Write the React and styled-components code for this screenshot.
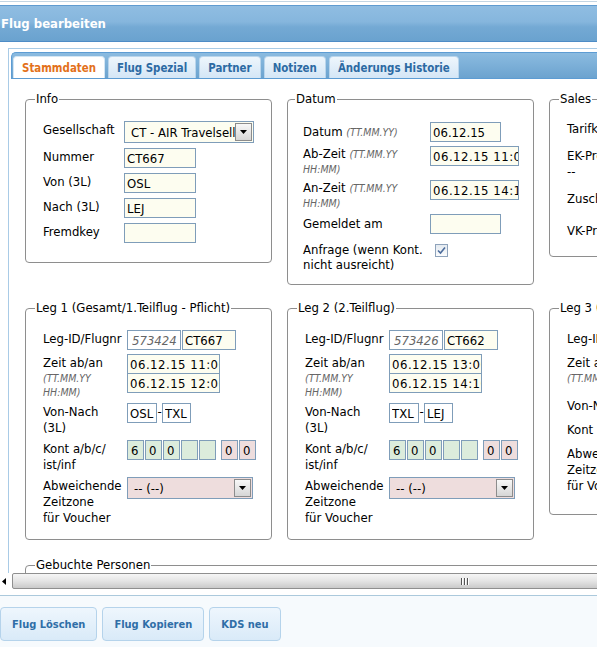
import React from "react";
import styled, { createGlobalStyle } from "styled-components";

const FONT = `"DejaVu Sans Condensed", "DejaVu Sans", Verdana, sans-serif`;

const GlobalStyle = createGlobalStyle`
  html, body { margin: 0; padding: 0; background: #fff; }
  body { font-family: ${FONT}; font-size: 13px; color: #000; overflow: hidden; }
  * { box-sizing: border-box; }
`;

const Page = styled.div`
  width: 597px;
  height: 647px;
  display: flex;
  flex-direction: column;
  overflow: hidden;
  background: #fff;
`;

const TopStrip = styled.div`
  flex: none;
  height: 5px;
  background: linear-gradient(to bottom, #fff 0, #fff 1px, #c3d5e3 1px, #c3d5e3 2px, #fff 2px);
`;

const Header = styled.header`
  flex: none;
  height: 37px;
  border-top: 1px solid #5f9bd0;
  border-bottom: 1px solid #4e8cc6;
  background: linear-gradient(to bottom, #8fbde2 0%, #86b6dd 45%, #74a9d4 60%, #6aa2cf 100%);
  display: flex;
  align-items: center;
  padding-left: 1px;
  color: #fff;
  font-weight: bold;
  font-size: 13px;
`;

const ScrollArea = styled.div`
  flex: none;
  height: 547px;
  display: flex;
  flex-direction: column;
`;

const Viewport = styled.div`
  flex: 1;
  min-height: 0;
  overflow: hidden;
  padding: 6px 0 0 8px;
`;

const Panel = styled.div`
  width: 960px;
  border-top: 1px solid #a9cbe6;
  border-left: 1px solid #a9cbe6;
  padding: 3px 0 0 2px;
`;

const TabBar = styled.div`
  height: 27px;
  border: 1px solid #5d9cd3;
  border-right: none;
  border-radius: 5px 0 0 0;
  background: linear-gradient(to bottom, #8bbbe0, #6ca3cf);
  display: flex;
  align-items: flex-end;
  gap: 3px;
  padding-left: 1px;
`;

const Tab = styled.div`
  height: 22px;
  padding: 0 8px;
  display: flex;
  align-items: center;
  border: 1px solid ${(p) => (p.$active ? "#d4e6f4" : "#b9d5ec")};
  border-bottom: none;
  border-radius: 4px 4px 0 0;
  background: ${(p) => (p.$active ? "#fff" : "linear-gradient(to bottom, #eef6fc, #d4e6f6)")};
  color: ${(p) => (p.$active ? "#e3711b" : "#2c6aa3")};
  font-weight: bold;
  font-size: 11.4px;
  white-space: nowrap;
`;

const Content = styled.div`
  padding: 12px 0 0 14px;
`;

const Grid = styled.div`
  display: grid;
  grid-template-columns: 247px 247px 300px;
  column-gap: 15px;
  row-gap: 15px;
  align-items: start;
`;

const Box = styled.fieldset`
  margin: 0;
  min-width: 0;
  border: 1px solid #8e8e8e;
  border-radius: 4px;
  padding: ${(p) => p.$pt ?? 14}px 10px ${(p) => p.$pb ?? 13}px ${(p) => p.$pl ?? 17}px;
`;

const WideBox = styled(Box)`
  margin-top: 17px;
  height: 120px;
`;

const Legend = styled.legend`
  padding: 0 1px;
  margin-left: -8px;
  line-height: 16px;
  font-size: 13px;
`;

const Form = styled.div`
  display: grid;
  grid-template-columns: ${(p) => p.$lw}px auto;
  row-gap: ${(p) => p.$gap ?? 4}px;
  align-items: start;
`;

const Label = styled.div`
  line-height: ${(p) => p.$lh ?? 16}px;
  padding-top: ${(p) => p.$pt ?? 1}px;
  white-space: nowrap;
`;

const Hint = styled.span`
  font-style: italic;
  font-size: 10.5px;
  color: #666;
  display: ${(p) => (p.$block ? "block" : "inline")};
  line-height: ${(p) => (p.$block ? "14px" : "1")};
`;

const Field = styled.div`
  display: flex;
  align-items: flex-start;
  gap: ${(p) => p.$gap ?? 0}px;
  min-height: ${(p) => p.$h ?? 20}px;
`;

const Input = styled.input`
  display: block;
  width: ${(p) => p.$w}px;
  height: 20px;
  margin: 0;
  padding: 0 0 0 ${(p) => p.$pl ?? 2}px;
  border: 1px solid #7f9db9;
  background: ${(p) => p.$bg || "#fdfdf0"};
  font-family: ${FONT};
  font-size: 13px;
  font-style: ${(p) => (p.$italic ? "italic" : "normal")};
  color: ${(p) => (p.$italic ? "#666" : "#000")};
  letter-spacing: ${(p) => p.$ls ?? 0}px;
  outline: none;
`;

const Stack = styled.div`
  display: flex;
  flex-direction: column;
  & > * + * { margin-top: -1px; }
`;

const Dash = styled.span`
  width: 5px;
  text-align: center;
  line-height: 18px;
`;

const Group = styled.div`
  display: flex;
  gap: 1px;
`;

const SelectBox = styled.div`
  width: ${(p) => p.$w}px;
  height: 22px;
  border: 1px solid #7f9db9;
  background: ${(p) => p.$bg};
  display: flex;
  align-items: center;
  padding-left: ${(p) => p.$pl}px;
  white-space: nowrap;
  overflow: hidden;
`;

const SelectText = styled.span`
  flex: 1;
  overflow: hidden;
`;

const DropBtn = styled.span`
  flex: none;
  width: 17px;
  height: 18px;
  margin-right: 1px;
  border: 1px solid #8c8c8c;
  background: linear-gradient(to bottom, #f8f8f8, #d6d6d6);
  display: flex;
  align-items: center;
  justify-content: center;
`;

const Check = styled.span`
  width: 13px;
  height: 13px;
  margin: 2px 0 0 5px;
  border: 1px solid #8fa3bb;
  background: linear-gradient(to bottom, #e4eaf0, #fbfcfd);
  display: flex;
  align-items: center;
  justify-content: center;
`;

const HScroll = styled.div`
  flex: none;
  height: 16px;
  display: flex;
  background: #fff;
`;

const ArrowBtn = styled.div`
  flex: none;
  width: 12px;
  display: flex;
  align-items: center;
  padding-left: 2px;
`;

const Thumb = styled.div`
  flex: none;
  width: 906px;
  border: 1px solid #8f8f8f;
  border-radius: 2px;
  background: linear-gradient(to bottom, #f6f6f6, #e4e4e4 50%, #cacaca);
  display: flex;
  align-items: center;
  justify-content: center;
`;

const Spacer = styled.div`
  flex: none;
  height: 6px;
`;

const Footer = styled.footer`
  flex: 1;
  border-top: 1px solid #abc9dc;
  background: #f6fafd;
  display: flex;
  align-items: flex-start;
  gap: 5px;
  padding-top: 11px;
`;

const Button = styled.button`
  height: 34px;
  margin: 0;
  padding: 0 11px;
  border: 1px solid #b5d3eb;
  border-radius: 4px;
  background: linear-gradient(to bottom, #eef6fd, #d9eaf8);
  color: #2f6ea7;
  font-family: ${FONT};
  font-weight: bold;
  font-size: 11px;
  cursor: pointer;
`;

const Tri = () => (
  <svg width="7" height="4" viewBox="0 0 7 4">
    <path d="M0 0H7L3.5 4Z" fill="#000" />
  </svg>
);

const Select = ({ w, bg, pl, text }) => (
  <SelectBox $w={w} $bg={bg} $pl={pl}>
    <SelectText>{text}</SelectText>
    <DropBtn>
      <Tri />
    </DropBtn>
  </SelectBox>
);

const GREEN = "#dcecdc";
const PINK = "#eedddd";

function Leg({ legend, id, nr, ab, an, von, nach, kont, inf, lw = 84, wide = false, pb }) {
  return (
    <Box $pb={pb}>
      <Legend>{legend}</Legend>
      <Form $lw={lw}>
        <Label>Leg-ID/Flugnr</Label>
        <Field $gap={1}>
          <Input $w={54} $pl={4} $italic $bg="#fff" readOnly value={id} />
          <Input $w={54} readOnly value={nr} />
        </Field>

        <Label>
          Zeit ab/an
          {wide ? (
            <Hint $block>(TT.MM.YY HH:MM)</Hint>
          ) : (
            <Hint $block>
              (TT.MM.YY
              <br />
              HH:MM)
            </Hint>
          )}
        </Label>
        <Stack>
          <Input $w={93} $ls={0.5} readOnly value={ab} />
          <Input $w={93} $ls={0.5} readOnly value={an} />
        </Stack>

        <Label>
          {wide ? (
            "Von-Nach (3L)"
          ) : (
            <>
              Von-Nach
              <br />
              (3L)
            </>
          )}
        </Label>
        <Field>
          <Input $w={30} $bg="#fff" readOnly value={von} />
          <Dash>-</Dash>
          <Input $w={29} $bg="#fff" readOnly value={nach} />
        </Field>

        <Label>
          {wide ? (
            "Kont a/b/c/ist/inf"
          ) : (
            <>
              Kont a/b/c/
              <br />
              ist/inf
            </>
          )}
        </Label>
        <Field $gap={5}>
          <Group>
            {kont.map((v, i) => (
              <Input key={i} $w={17} $pl={3} $bg={GREEN} readOnly value={v} />
            ))}
          </Group>
          <Group>
            {inf.map((v, i) => (
              <Input key={i} $w={17} $pl={3} $bg={PINK} readOnly value={v} />
            ))}
          </Group>
        </Field>

        <Label>
          Abweichende
          <br />
          Zeitzone
          <br />
          für Voucher
        </Label>
        <Field>
          <Select w={126} bg={PINK} pl={6} text="-- (--)" />
        </Field>
      </Form>
    </Box>
  );
}

const tabs = ["Stammdaten", "Flug Spezial", "Partner", "Notizen", "Änderungs Historie"];

export default function App() {
  return (
    <Page>
      <GlobalStyle />
      <TopStrip />
      <Header>Flug bearbeiten</Header>
      <ScrollArea>
        <Viewport>
          <Panel>
            <TabBar>
              {tabs.map((t, i) => (
                <Tab key={t} $active={i === 0}>
                  {t}
                </Tab>
              ))}
            </TabBar>
            <Content>
              <Grid>
                <Box $pb={19}>
                  <Legend>Info</Legend>
                  <Form $lw={81} $gap={5}>
                    <Label $pt={1}>Gesellschaft</Label>
                    <Field $h={22}>
                      <Select w={130} bg="#fdfdf0" pl={6} text="CT - AIR Travelsell" />
                    </Field>
                    <Label>Nummer</Label>
                    <Field>
                      <Input $w={72} readOnly value="CT667" />
                    </Field>
                    <Label>Von (3L)</Label>
                    <Field>
                      <Input $w={72} readOnly value="OSL" />
                    </Field>
                    <Label>Nach (3L)</Label>
                    <Field>
                      <Input $w={72} readOnly value="LEJ" />
                    </Field>
                    <Label>Fremdkey</Label>
                    <Field>
                      <Input $w={72} readOnly value="" />
                    </Field>
                  </Form>
                </Box>

                <Box $pt={15} $pb={12} $pl={15}>
                  <Legend>Datum</Legend>
                  <Form $lw={127}>
                    <Label $pt={2} $lh={15}>
                      Datum <Hint>(TT.MM.YY)</Hint>
                    </Label>
                    <Field>
                      <Input $w={71} readOnly value="06.12.15" />
                    </Field>
                    <Label $pt={0} $lh={15}>
                      Ab-Zeit <Hint>(TT.MM.YY</Hint>
                      <br />
                      <Hint>HH:MM)</Hint>
                    </Label>
                    <Field>
                      <Input $w={89} $ls={0.5} readOnly value="06.12.15 11:00" />
                    </Field>
                    <Label $pt={0} $lh={15}>
                      An-Zeit <Hint>(TT.MM.YY</Hint>
                      <br />
                      <Hint>HH:MM)</Hint>
                    </Label>
                    <Field>
                      <Input $w={89} $ls={0.5} readOnly value="06.12.15 14:10" />
                    </Field>
                    <Label $pt={2} $lh={15}>Gemeldet am</Label>
                    <Field $h={24}>
                      <Input $w={71} readOnly value="" />
                    </Field>
                    <Label $pt={0} $lh={15}>
                      Anfrage (wenn Kont.
                      <br />
                      nicht ausreicht)
                    </Label>
                    <Field>
                      <Check>
                        <svg width="9" height="9" viewBox="0 0 9 9">
                          <path d="M1 4.5L3.5 7L8 1.5" stroke="#4c6c9c" strokeWidth="1.6" fill="none" />
                        </svg>
                      </Check>
                    </Field>
                  </Form>
                </Box>

                <Box $pb={14}>
                  <Legend>Sales</Legend>
                  <Form $lw={110}>
                    <Label $pt={0}>Tarifklasse</Label>
                    <Field $h={22} />
                    <Label $pt={1}>
                      EK-Preis
                      <br />
                      --
                    </Label>
                    <Field $h={39} />
                    <Label $pt={1}>Zuschlag</Label>
                    <Field $h={28} />
                    <Label $pt={1}>VK-Preis</Label>
                    <Field $h={20} />
                  </Form>
                </Box>

                <Leg
                  legend="Leg 1 (Gesamt/1.Teilflug - Pflicht)"
                  id="573424"
                  nr="CT667"
                  ab="06.12.15 11:00"
                  an="06.12.15 12:00"
                  von="OSL"
                  nach="TXL"
                  kont={["6", "0", "0", "", ""]}
                  inf={["0", "0"]}
                />
                <Leg
                  legend="Leg 2 (2.Teilflug)"
                  id="573426"
                  nr="CT662"
                  ab="06.12.15 13:00"
                  an="06.12.15 14:10"
                  von="TXL"
                  nach="LEJ"
                  kont={["6", "0", "0", "", ""]}
                  inf={["0", "0"]}
                />
                <Leg
                  legend="Leg 3 (3.Teilflug)"
                  id=""
                  nr=""
                  ab=""
                  an=""
                  von=""
                  nach=""
                  kont={["", "", "", "", ""]}
                  inf={["", ""]}
                  lw={130}
                  wide
                  pb={20}
                />
              </Grid>
              <WideBox>
                <Legend>Gebuchte Personen</Legend>
              </WideBox>
            </Content>
          </Panel>
        </Viewport>
        <HScroll>
          <ArrowBtn>
            <svg width="4" height="7" viewBox="0 0 4 7">
              <path d="M4 0V7L0 3.5Z" fill="#000" />
            </svg>
          </ArrowBtn>
          <Thumb>
            <svg width="8" height="7" viewBox="0 0 8 7">
              <rect x="0" y="0" width="1" height="7" fill="#555" />
              <rect x="3" y="0" width="1" height="7" fill="#555" />
              <rect x="6" y="0" width="1" height="7" fill="#555" />
              <rect x="1" y="0" width="1" height="7" fill="#fff" />
              <rect x="4" y="0" width="1" height="7" fill="#fff" />
              <rect x="7" y="0" width="1" height="7" fill="#fff" />
            </svg>
          </Thumb>
        </HScroll>
      </ScrollArea>
      <Spacer />
      <Footer>
        <Button>Flug Löschen</Button>
        <Button>Flug Kopieren</Button>
        <Button>KDS neu</Button>
      </Footer>
    </Page>
  );
}
